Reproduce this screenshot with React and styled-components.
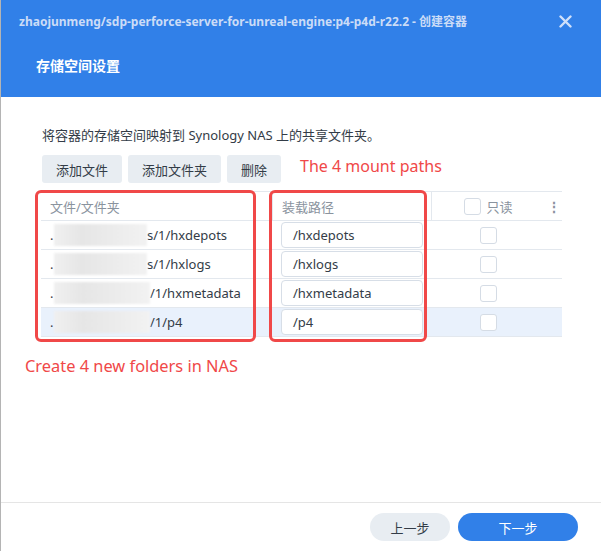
import styled, { createGlobalStyle } from "styled-components";

const Global = createGlobalStyle`
  html, body {
    margin: 0;
    padding: 0;
    background: #fff;
  }
  body {
    font-family: "Noto Sans", "Noto Sans CJK SC", sans-serif;
  }
`;

const rows = [
  { prefix: "s/1/hxdepots", mount: "/hxdepots", blur: 93 },
  { prefix: "s/1/hxlogs", mount: "/hxlogs", blur: 93 },
  { prefix: "/1/hxmetadata", mount: "/hxmetadata", blur: 96 },
  { prefix: "/1/p4", mount: "/p4", blur: 96, active: true },
];

export default function App() {
  return (
    <>
      <Global />
      <Dialog>
        <Header>
          <TitleBar>
            <span>zhaojunmeng/sdp-perforce-server-for-unreal-engine:p4-p4d-r22.2 - 创建容器</span>
            <Close>
              <svg width="13" height="13" viewBox="0 0 13 13">
                <path d="M1.5 1.5 L11.5 11.5 M11.5 1.5 L1.5 11.5" stroke="#cfe0fa" strokeWidth="2.4" strokeLinecap="round" />
              </svg>
            </Close>
          </TitleBar>
          <Heading>存储空间设置</Heading>
        </Header>

        <Body>
          <Desc>将容器的存储空间映射到 Synology NAS 上的共享文件夹。</Desc>
          <Toolbar>
            <ToolButton>添加文件</ToolButton>
            <ToolButton>添加文件夹</ToolButton>
            <ToolButton>删除</ToolButton>
            <Note $ml={13} $mb={7}>The 4 mount paths</Note>
          </Toolbar>

          <TableWrap>
            <Table>
              <HeadRow>
                <Cell>文件/文件夹</Cell>
                <Cell $divider>装载路径</Cell>
                <Cell $center $divider>
                  <Check />
                  <span>只读</span>
                </Cell>
                <Cell $center>
                  <Dots>⋮</Dots>
                </Cell>
              </HeadRow>
              {rows.map((r) => (
                <Row key={r.mount} $active={r.active}>
                  <Cell $dark>
                    <Dot>.</Dot>
                    <Blur style={{ width: r.blur }} />
                    <span>{r.prefix}</span>
                  </Cell>
                  <Cell>
                    <PathInput>{r.mount}</PathInput>
                  </Cell>
                  <Cell $center>
                    <Check />
                  </Cell>
                  <Cell />
                </Row>
              ))}
            </Table>
            <Mark $left={-6} $width={221} />
            <Mark $left={228} $width={158} />
          </TableWrap>

          <Note $ml={-16} $mt={19} $size={16.4}>Create 4 new folders in NAS</Note>
        </Body>

        <Footer>
          <PillButton>上一步</PillButton>
          <PillButton $primary>下一步</PillButton>
        </Footer>
      </Dialog>
    </>
  );
}

const Dialog = styled.div`
  width: 601px;
  height: 551px;
  box-sizing: border-box;
  border-left: 1px solid #b4b4b4;
  display: flex;
  flex-direction: column;
  background: #fff;
`;

const Header = styled.div`
  background: #3180e8;
  height: 97px;
  display: flex;
  flex-direction: column;
`;

const TitleBar = styled.div`
  height: 42px;
  display: flex;
  align-items: center;
  justify-content: space-between;
  padding: 0 29px 0 18px;
  color: #cbdcf7;
  font-size: 12px;
  font-weight: 700;
`;

const Close = styled.div`
  display: flex;
  align-items: center;
`;

const Heading = styled.div`
  padding: 13px 0 0 35px;
  color: #fff;
  font-size: 14px;
  font-weight: 700;
`;

const Body = styled.div`
  flex: 1;
  padding: 29px 40px 0 40px;
  display: flex;
  flex-direction: column;
`;

const Desc = styled.div`
  font-size: 13px;
  color: #333c47;
  line-height: 18px;
  padding-left: 1px;
`;

const Toolbar = styled.div`
  margin-top: 11px;
  display: flex;
  align-items: center;
  gap: 6px;
  padding-left: 1px;
`;

const ToolButton = styled.div`
  height: 28px;
  padding: 0 14px;
  display: flex;
  align-items: center;
  border-radius: 3px;
  background: #e8edf2;
  color: #333c47;
  font-size: 13px;
`;

const Note = styled.div`
  margin-left: ${(p) => p.$ml || 0}px;
  margin-top: ${(p) => p.$mt || 0}px;
  margin-bottom: ${(p) => p.$mb || 0}px;
  color: #f04848;
  font-size: ${(p) => p.$size || 16}px;
  line-height: 20px;
`;

const TableWrap = styled.div`
  position: relative;
  margin-top: 8px;
  width: 521px;
`;

const Table = styled.div`
  border-top: 1px solid #e3e8ee;
  display: grid;
  grid-template-columns: 231px 159px 114px 17px;
`;

const HeadRow = styled.div`
  display: contents;
  & > div {
    height: 29px;
    color: #8a939e;
    border-bottom: 1px solid #e3e8ee;
  }
`;

const Row = styled.div`
  display: contents;
  & > div {
    height: 29px;
    border-bottom: 1px solid #e3e8ee;
    background: ${(p) => (p.$active ? "#e9f1fc" : "transparent")};
  }
`;

const Cell = styled.div`
  display: flex;
  align-items: center;
  justify-content: ${(p) => (p.$center ? "center" : "flex-start")};
  gap: 5px;
  padding-left: ${(p) => (p.$center ? 0 : 9)}px;
  font-size: 13px;
  color: ${(p) => (p.$dark ? "#333c47" : "inherit")};
  border-left: ${(p) => (p.$divider ? "1px solid #e3e8ee" : "none")};
  white-space: nowrap;
  overflow: hidden;
  box-sizing: border-box;
`;

const Dot = styled.span`
  width: 4px;
`;

const Blur = styled.div`
  height: 22px;
  margin-left: -5px;
  margin-right: -5px;
  background: linear-gradient(90deg, #f0f0f0, #e6e6e6 30%, #ebebeb 60%, #f2f2f2);
  filter: blur(1px);
`;

const PathInput = styled.div`
  width: 142px;
  height: 26px;
  box-sizing: border-box;
  border: 1px solid #d7dee7;
  border-radius: 4px;
  background: #fff;
  display: flex;
  align-items: center;
  padding-left: 11px;
  color: #333c47;
  font-size: 13px;
`;

const Check = styled.div`
  width: 17px;
  height: 17px;
  box-sizing: border-box;
  border: 1px solid #d5dce5;
  border-radius: 3px;
  background: #fff;
`;

const Dots = styled.span`
  color: #8a939e;
  font-weight: 700;
  font-size: 14px;
`;

const Mark = styled.div`
  position: absolute;
  top: -1px;
  left: ${(p) => p.$left}px;
  width: ${(p) => p.$width}px;
  height: 152px;
  border: 3px solid #f04848;
  border-radius: 6px;
  box-sizing: border-box;
  pointer-events: none;
`;

const Footer = styled.div`
  height: 48px;
  border-top: 1px solid #e5e5e5;
  display: flex;
  align-items: center;
  justify-content: flex-end;
  gap: 8px;
  padding: 0 23px 0 0;
`;

const PillButton = styled.div`
  width: ${(p) => (p.$primary ? 120 : 80)}px;
  height: 28px;
  border-radius: 14px;
  display: flex;
  align-items: center;
  justify-content: center;
  font-size: 13px;
  background: ${(p) => (p.$primary ? "#3180e8" : "#e8edf2")};
  color: ${(p) => (p.$primary ? "#fff" : "#333c47")};
`;
